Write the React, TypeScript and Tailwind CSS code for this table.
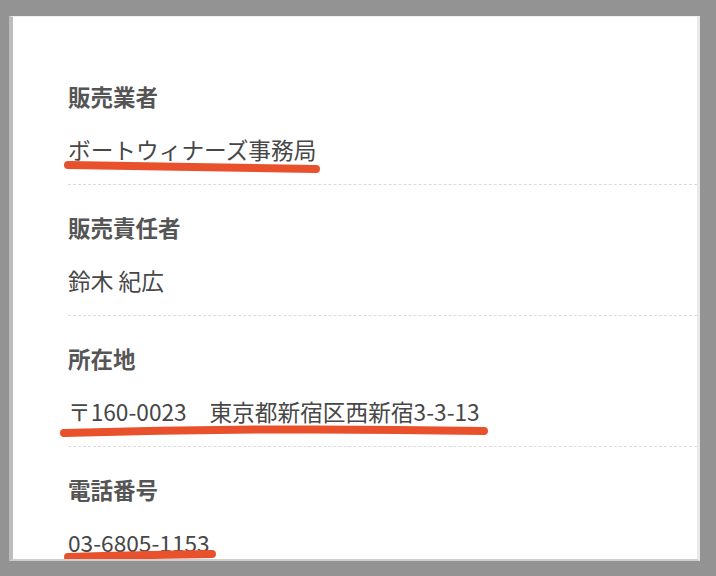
const font = { fontFamily: '"Noto Sans CJK JP", "Noto Sans", sans-serif' }

type Row = {
  label: string
  value: string
  mark?: { d: string }
}

const rows: Row[] = [
  {
    label: "販売業者",
    value: "ボートウィナーズ事務局",
    mark: { d: "M0 31 Q 120 33 248 35" },
  },
  { label: "販売責任者", value: "鈴木 紀広" },
  {
    label: "所在地",
    value: "〒160-0023　東京都新宿区西新宿3-3-13",
    mark: { d: "M-4 37 Q 200 31 416 35" },
  },
  {
    label: "電話番号",
    value: "03-6805-1153",
    mark: { d: "M0 30 Q 70 28 144 27" },
  },
]

function Underline({ d }: { d: string }) {
  return (
    <svg
      className="pointer-events-none absolute left-0 top-0 overflow-visible"
      width="10"
      height="10"
    >
      <path
        d={d}
        fill="none"
        stroke="#e8512b"
        strokeWidth="8"
        strokeLinecap="round"
      />
    </svg>
  )
}

export default function App() {
  return (
    <div className="h-[576px] w-[716px] overflow-hidden bg-[#939393] pl-[9px] pr-[16px] pt-[16px]" style={font}>
      <div className="h-[545px] overflow-hidden border-b-2 border-l-4 border-r-[3px] border-t border-b-[#cfcfcf] border-l-[#bdbdbd] border-r-[#e9e9e9] border-t-[#eeeeee] bg-white pl-[55px] pt-[37px]">
        {rows.map((row, i) => (
          <div
            key={row.label}
            className={
              i < rows.length - 1
                ? "border-b border-dashed border-[#dcdcdc] pb-[18px] pt-[26px]"
                : "pt-[26px]"
            }
          >
            <div className="h-[32px] text-[22.5px] font-bold leading-[32px] text-[#555555]">
              {row.label}
            </div>
            <div className="relative mt-[22px] h-[32px] text-[22.7px] leading-[32px] text-[#474747]">
              <span className="relative z-0">{row.value}</span>
              {row.mark && <Underline d={row.mark.d} />}
            </div>
          </div>
        ))}
      </div>
    </div>
  )
}
